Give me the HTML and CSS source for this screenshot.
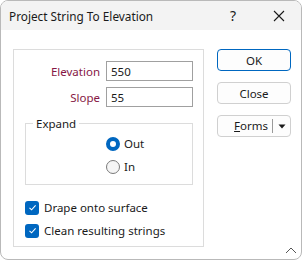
FILE: index.html
```html
<!DOCTYPE html>
<html lang="en">
<head>
    <meta charset="UTF-8">
    <title>Project String To Elevation</title>
    <link rel="stylesheet" href="styles.css">
</head>
<body>
    <div class="window">
        <div class="title-bar">
            <span class="title">Project String To Elevation</span>
            <span class="title-btn help">?</span>
            <span class="title-btn close">
                <svg width="12" height="12" viewBox="0 0 12 12"><path d="M1 1 L11 11 M11 1 L1 11" stroke="#1a1a1a" stroke-width="1.1" fill="none"/></svg>
            </span>
        </div>
        <div class="dialog-body">
            <div class="panel">
                <div class="field-row">
                    <label class="field-label">Elevation</label>
                    <input class="field-input" type="text" value="550">
                </div>
                <div class="field-row">
                    <label class="field-label">Slope</label>
                    <input class="field-input" type="text" value="55">
                </div>
                <fieldset class="group">
                    <legend>Expand</legend>
                    <div class="radio-row">
                        <span class="radio checked"></span>
                        <span>Out</span>
                    </div>
                    <div class="radio-row">
                        <span class="radio"></span>
                        <span>In</span>
                    </div>
                </fieldset>
                <div class="check-row">
                    <span class="checkbox">
                        <svg width="9" height="9" viewBox="0 0 9 9"><path d="M1.5 4.8 L3.6 6.8 L7.6 2.4" stroke="#fff" stroke-width="1.1" fill="none"/></svg>
                    </span>
                    <span>Drape onto surface</span>
                </div>
                <div class="check-row">
                    <span class="checkbox">
                        <svg width="9" height="9" viewBox="0 0 9 9"><path d="M1.5 4.8 L3.6 6.8 L7.6 2.4" stroke="#fff" stroke-width="1.1" fill="none"/></svg>
                    </span>
                    <span>Clean resulting strings</span>
                </div>
            </div>
            <div class="buttons">
                <button class="btn default">OK</button>
                <button class="btn">Close</button>
                <button class="btn split">
                    <span class="split-main"><u>F</u>orms</span>
                    <span class="split-arrow">
                        <svg width="8" height="5" viewBox="0 0 8 5"><path d="M0.5 0.5 L7.5 0.5 L4 4.5 Z" fill="#1a1a1a"/></svg>
                    </span>
                </button>
            </div>
        </div>
        <div class="grip">
            <svg width="12" height="7" viewBox="0 0 12 7"><path d="M1 6 L6 1 L11 6" stroke="#555" stroke-width="1" fill="none"/></svg>
        </div>
    </div>
</body>
</html>
```
FILE: styles.css
```css
body {
    margin: 0;
    background-color: #fff;
    font-family: "Noto Sans", "Open Sans", sans-serif;
    font-size: 11.5px;
    color: #1a1a1a;
}
.window {
    width: 302px;
    height: 260px;
    box-sizing: border-box;
    border: 1px solid #b9b9b9;
    border-radius: 8px;
    background-color: #fff;
    display: flex;
    flex-direction: column;
    overflow: hidden;
}
.title-bar {
    height: 30px;
    background-color: #f3f3f3;
    display: flex;
    align-items: center;
    padding-left: 8px;
    font-size: 11.8px;
}
.title {
    flex: 1;
}
.title-btn {
    display: flex;
    justify-content: center;
    align-items: center;
}
.help {
    width: 16px;
    margin-right: 30px;
    font-size: 14px;
}
.close {
    width: 16px;
    margin-right: 14px;
}
.dialog-body {
    display: flex;
    padding: 19px 0 0 12px;
    flex: 1;
}
.panel {
    width: 191px;
    height: 198px;
    box-sizing: border-box;
    border: 1px solid #dcdcdc;
    padding: 11px 10px 0 11px;
}
.field-row {
    display: flex;
    align-items: center;
    margin-bottom: 6px;
}
.field-label {
    width: 75px;
    text-align: right;
    margin-right: 6px;
    color: #861745;
}
.field-input {
    width: 87px;
    height: 20px;
    box-sizing: border-box;
    border: 1px solid #a0a0a0;
    padding: 0 0 0 4px;
    font-family: inherit;
    font-size: 11.5px;
    color: #1a1a1a;
    outline: none;
}
.group {
    margin: 9px 0 0 0;
    padding: 1px 0 0 80px;
    border: 1px solid #dcdcdc;
    width: 168px;
    height: 69px;
    box-sizing: border-box;
}
.group legend {
    padding: 0 3px;
    margin-left: -73px;
}
.radio-row {
    display: flex;
    align-items: center;
    height: 23px;
}
.radio {
    width: 14px;
    height: 14px;
    box-sizing: border-box;
    border-radius: 50%;
    border: 1px solid #7a7a7a;
    background-color: #f5f5f5;
    margin-right: 4px;
}
.radio.checked {
    border: 4px solid #0067c0;
    background-color: #fff;
}
.check-row {
    display: flex;
    align-items: center;
    height: 23px;
}
.group + .check-row {
    margin-top: 11px;
}
.checkbox {
    width: 14px;
    height: 14px;
    border-radius: 3px;
    background-color: #0067c0;
    display: flex;
    justify-content: center;
    align-items: center;
    margin-right: 5px;
}
.buttons {
    display: flex;
    flex-direction: column;
    gap: 11px;
    margin-left: 13px;
}
.btn {
    width: 74px;
    height: 22px;
    box-sizing: border-box;
    border: 1px solid #d0d0d0;
    border-radius: 4px;
    background-color: #fdfdfd;
    font-family: inherit;
    font-size: 11.5px;
    color: #1a1a1a;
    padding: 0;
}
.btn.default {
    border-color: #0067c0;
}
.split {
    display: flex;
    align-items: center;
}
.split-main {
    flex: 1;
    text-align: right;
    padding-right: 4px;
    border-right: 1px solid #9a9a9a;
    line-height: 14px;
}
.split-arrow {
    width: 17px;
    display: flex;
    justify-content: center;
}
.grip {
    display: flex;
    justify-content: flex-end;
    padding: 0 4px 5px 0;
}
```
